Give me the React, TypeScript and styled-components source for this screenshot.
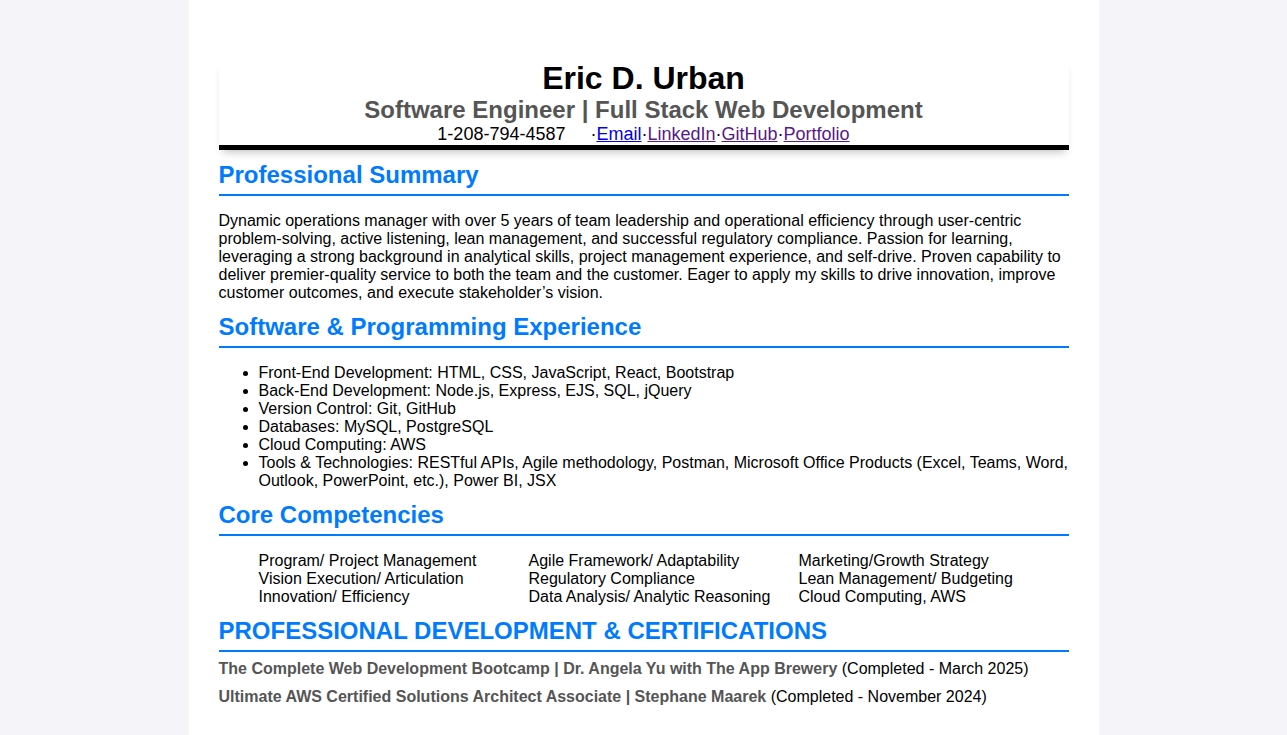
import React from "react";
import styled, { createGlobalStyle } from "styled-components";

const Global = createGlobalStyle`
  body { margin: 0; background: #f4f4f9; font-family: "Liberation Sans", Arial, sans-serif; color: #000; }
`;
const Page = styled.div`
  width: 850px; margin: 0 auto; background: #fff; padding: 60px 30px 20px; min-height: 735px; box-sizing: border-box;
  width: 910px;
`;
const Header = styled.header`
  text-align: center; border-bottom: 5px solid #000; box-shadow: 0 6px 8px -4px rgba(0,0,0,0.25);
`;
const Name = styled.h1`margin: 0; font-size: 32px; line-height: 36px;`;
const Title = styled.h2`margin: 0; font-size: 24px; line-height: 28px; color: #555;`;
const Contact = styled.div`font-size: 18px; line-height: 20px; padding-bottom: 1px;
  a { color: #551a8b; } a.e { color: #0000ee; }`;
const Section = styled.section`margin-top: 10px;`;
const H = styled.h3`margin: 0 0 16px; font-size: 24px; line-height: 30px; color: #007bff; border-bottom: 2px solid #007bff; padding-bottom: 4px;`;
const P = styled.p`margin: 0; font-size: 16px; line-height: 18px;`;
const UL = styled.ul`margin: 0; padding-left: 40px; font-size: 16px; line-height: 18px;`;
const Grid = styled.div`display: grid; grid-template-columns: repeat(3, 1fr); padding-left: 40px; font-size: 16px; line-height: 18px;`;
const Cert = styled.p`margin: 0 0 10px; font-size: 16px; line-height: 18px; b { color: #555; }`;

export default function App() {
  const skills = ["Front-End Development: HTML, CSS, JavaScript, React, Bootstrap","Back-End Development: Node.js, Express, EJS, SQL, jQuery","Version Control: Git, GitHub","Databases: MySQL, PostgreSQL","Cloud Computing: AWS","Tools & Technologies: RESTful APIs, Agile methodology, Postman, Microsoft Office Products (Excel, Teams, Word, Outlook, PowerPoint, etc.), Power BI, JSX"];
  const comp = ["Program/ Project Management","Agile Framework/ Adaptability","Marketing/Growth Strategy","Vision Execution/ Articulation","Regulatory Compliance","Lean Management/ Budgeting","Innovation/ Efficiency","Data Analysis/ Analytic Reasoning","Cloud Computing, AWS"];
  return (<>
    <Global />
    <Page>
      <Header>
        <Name>Eric D. Urban</Name>
        <Title>Software Engineer | Full Stack Web Development</Title>
        <Contact>1-208-794-4587 &nbsp;&nbsp;&nbsp;&nbsp;·<a className="e" href="#">Email</a>·<a href="#">LinkedIn</a>·<a href="#">GitHub</a>·<a href="#">Portfolio</a></Contact>
      </Header>
      <Section>
        <H>Professional Summary</H>
        <P>Dynamic operations manager with over 5 years of team leadership and operational efficiency through user-centric problem-solving, active listening, lean management, and successful regulatory compliance. Passion for learning, leveraging a strong background in analytical skills, project management experience, and self-drive. Proven capability to deliver premier-quality service to both the team and the customer. Eager to apply my skills to drive innovation, improve customer outcomes, and execute stakeholder’s vision.</P>
      </Section>
      <Section>
        <H>Software &amp; Programming Experience</H>
        <UL>{skills.map(s => <li key={s}>{s}</li>)}</UL>
      </Section>
      <Section>
        <H>Core Competencies</H>
        <Grid>{comp.map(s => <div key={s}>{s}</div>)}</Grid>
      </Section>
      <Section>
        <H style={{ marginBottom: 8 }}>PROFESSIONAL DEVELOPMENT &amp; CERTIFICATIONS</H>
        <Cert><b>The Complete Web Development Bootcamp | Dr. Angela Yu with The App Brewery</b> (Completed - March 2025)</Cert>
        <Cert><b>Ultimate AWS Certified Solutions Architect Associate | Stephane Maarek</b> (Completed - November 2024)</Cert>
      </Section>
    </Page>
  </>);
}
